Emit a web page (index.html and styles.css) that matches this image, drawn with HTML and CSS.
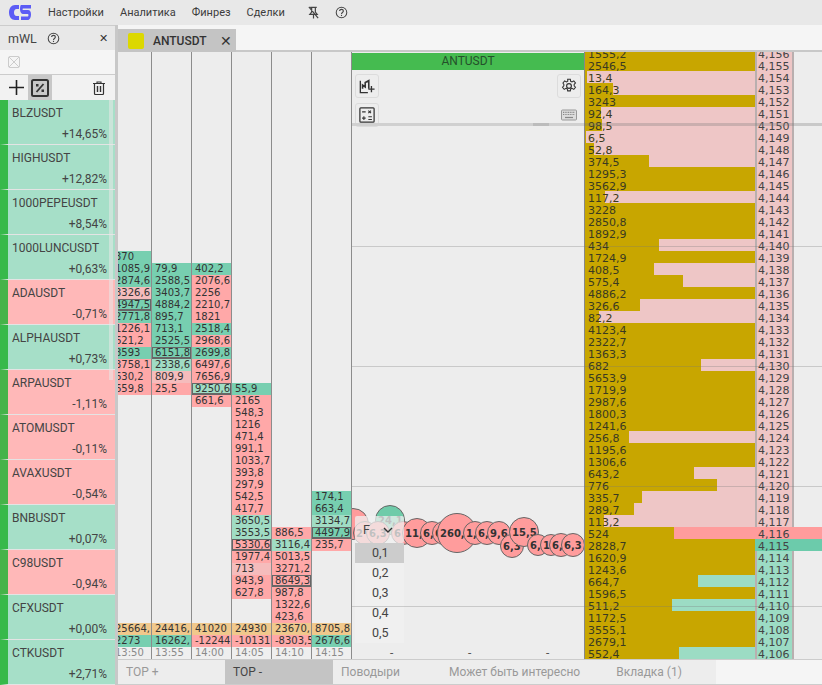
FILE: index.html
```html
<!DOCTYPE html>
<html lang="en">
<head>
  <meta charset="UTF-8">
  <title>ANTUSDT</title>
  <link rel="stylesheet" href="styles.css">
</head>
<body>
  <header class="topbar">
    <svg class="logo" viewBox="0 0 22 15">
      <path d="M10 0H6C2.500 0 0 3 0 7.500S2.500 15 6 15h4v-4H7.500C6 11 5 9.500 5 7.500S6 4 7.500 4H10z" fill="#5c5cf5"/>
      <path d="M12 0h10v3.500H14c-.6 0-.6 1.500 0 1.500h5c2 0 3 1.500 3 4.500S20.500 15 19 15h-7v-3.500h7c.6 0 .6-2.500 0-2.500h-5C12.500 9 11 7 11 4.500S11.500 0 12 0z" fill="#5c5cf5"/>
    </svg>
    <nav class="menu">
      <a>Настройки</a>
      <a>Аналитика</a>
      <a>Финрез</a>
      <a>Сделки</a>
    </nav>
    <svg class="top-icon pin" viewBox="0 0 14 14">
      <path d="M3.500 1.500h7M5 1.500v5L3 9h8L9 6.500v-5M7 9v4.500M2 1l10 12" fill="none" stroke="#444" stroke-width="1.300"/>
    </svg>
    <svg class="top-icon help" viewBox="0 0 14 14">
      <circle cx="7" cy="7" r="5.700" fill="none" stroke="#444" stroke-width="1.100"/>
      <path d="M5 5.500C5 3 9 3 9 5.500 9 7 7 7 7 8.500" fill="none" stroke="#444" stroke-width="1.200"/>
      <rect x="6.400" y="9.500" width="1.200" height="1.300" fill="#444"/>
    </svg>
  </header>

  <div class="layout">
    <aside class="sidebar">
      <div class="side-head">
        <span class="side-title">mWL</span>
        <svg class="side-help" viewBox="0 0 14 14">
          <circle cx="7" cy="7" r="5.700" fill="none" stroke="#444" stroke-width="1.100"/>
          <path d="M5 5.500C5 3 9 3 9 5.500 9 7 7 7 7 8.500" fill="none" stroke="#444" stroke-width="1.200"/>
          <rect x="6.400" y="9.500" width="1.200" height="1.300" fill="#444"/>
        </svg>
        <span class="side-close">✕</span>
      </div>
      <div class="side-filter">
        <svg class="filter-box" viewBox="0 0 12 12">
          <rect x=".5" y=".5" width="11" height="11" rx="1.500" fill="none" stroke="#ccc"/>
          <path d="M1 1l10 10M11 1L1 11" stroke="#ccc"/>
        </svg>
      </div>
      <div class="side-tools">
        <svg class="tool-plus" viewBox="0 0 15 15"><path d="M7.500 0v15M0 7.500h15" stroke="#222" stroke-width="1.600"/></svg>
        <span class="tool-percent">
          <svg viewBox="0 0 18 18">
            <rect x="1" y="1" width="16" height="16" rx="1.500" fill="none" stroke="#333" stroke-width="2"/>
            <path d="M12.500 5L5.500 13" stroke="#333" stroke-width="1.800"/>
            <rect x="5" y="5" width="2.500" height="2.500" fill="#333"/>
            <rect x="10.500" y="10.500" width="2.500" height="2.500" fill="#333"/>
          </svg>
        </span>
        <svg class="tool-trash" viewBox="0 0 12 14">
          <path d="M0 2.500h12M4 2.500V1h4v1.500" fill="none" stroke="#333" stroke-width="1.100"/>
          <path d="M1.500 2.500v10c0 .6.400 1 1 1h7c.6 0 1-.4 1-1v-10" fill="none" stroke="#333" stroke-width="1.200"/>
          <path d="M4.500 5v6M7.500 5v6" stroke="#333" stroke-width="1.400"/>
        </svg>
      </div>
      <div class="watchlist" id="watchlist"></div>
      <div class="side-scroll"></div>
    </aside>

    <main class="workspace">
      <div class="tabstrip">
        <div class="doc-tab">
          <span class="doc-swatch"></span>
          <span class="doc-name">ANTUSDT</span>
          <span class="doc-close">✕</span>
        </div>
      </div>

      <div class="board">
        <section class="clusters" id="clusters"></section>

        <section class="chart">
          <div class="chart-title">ANTUSDT</div>
          <div class="chart-tools">
            <div class="tool-col">
              <span class="tool-btn">
                <svg viewBox="0 0 18 18">
                  <path d="M1.500 3v13.500H10" fill="none" stroke="#333" stroke-width="1.500"/>
                  <path d="M4 12V8l3 2V5l4-2v9" fill="none" stroke="#333" stroke-width="1.800"/>
                  <path d="M14 9v7M10.500 12.500h7" stroke="#333" stroke-width="1.500"/>
                </svg>
              </span>
              <span class="tool-btn">
                <svg viewBox="0 0 18 18">
                  <rect x="1" y="1" width="16" height="16" rx="1" fill="none" stroke="#333" stroke-width="1.400"/>
                  <path d="M3.500 5.500h4M10.500 4l3 3M13.500 4l-3 3M3.500 12.500h4M5.500 10.500v4M10.500 11h4M10.500 14h4" stroke="#333" stroke-width="1.200"/>
                </svg>
              </span>
            </div>
            <div class="tool-col tool-col-right">
              <span class="tool-btn">
                <svg viewBox="0 0 18 18">
                  <circle cx="9" cy="9" r="2.700" fill="none" stroke="#333" stroke-width="1.300"/>
                  <path d="M7.500 1.500h3l.4 2.200 1.500.7 2-1.200 1.900 2.400-1.500 1.600v1.600l1.500 1.600-1.900 2.400-2-1.200-1.500.7-.4 2.200h-3l-.4-2.200-1.500-.7-2 1.200-1.900-2.400 1.500-1.600V7.200L2.200 5.600l1.900-2.400 2 1.200 1.500-.7z" fill="none" stroke="#333" stroke-width="1.200"/>
                </svg>
              </span>
              <svg class="keyboard" viewBox="0 0 16 11">
                <rect x=".5" y=".5" width="15" height="10" rx="1" fill="#ddd" stroke="#999"/>
                <path d="M2 2.800h12M2 5h12" stroke="#888" stroke-width="1.200" stroke-dasharray="1 .7"/>
                <path d="M4 8h8" stroke="#888" stroke-width="1.200"/>
              </svg>
            </div>
          </div>
          <div class="splitter"><span class="splitter-grip"></span></div>
          <div class="bubbles" id="bubbles"></div>
          <div class="tick-row"><span>-</span><span>-</span><span>-</span></div>

          <div class="step-picker">
            <div class="step-head"><span>F</span>
              <svg viewBox="0 0 10 6"><path d="M1 1l4 4 4-4" fill="none" stroke="#333" stroke-width="1.400"/></svg>
            </div>
            <ul class="step-list">
              <li class="is-selected">0,1</li>
              <li>0,2</li>
              <li>0,3</li>
              <li>0,4</li>
              <li>0,5</li>
            </ul>
          </div>
        </section>

        <section class="ladder" id="ladder"></section>

        <div class="grid-line grid-top"></div>
        <div class="grid-line grid-a"></div>
        <div class="grid-line grid-b"></div>
        <div class="grid-line grid-c"></div>
        <div class="grid-line grid-d"></div>
      </div>

      <nav class="bottom-tabs">
        <a>TOP +</a>
        <a class="is-active">TOP -</a>
        <a>Поводыри</a>
        <a>Может быть интересно</a>
        <a>Вкладка (1)</a>
      </nav>
    </main>
  </div>

  <script src="script.js"></script>
</body>
</html>
```

FILE: styles.css
```css
* {
  box-sizing: border-box;
  margin: 0;
  padding: 0;
}

html, body {
  height: 100%;
  overflow: hidden;
}

body {
  font-family: Roboto, "Liberation Sans", sans-serif;
  font-size: 12px;
  color: #444;
  background-color: #ededed;
}

/* top bar */
.topbar {
  display: flex;
  align-items: center;
  height: 25px;
  background-color: #e8e8e8;
}

.logo {
  width: 22px;
  height: 15px;
  margin-left: 9px;
  margin-bottom: 1px;
}

.menu {
  display: flex;
  gap: 16px;
  margin-left: 17px;
  font-size: 11px;
  color: #3c3c3c;
}

.top-icon {
  width: 13px;
  height: 13px;
}

.pin {
  margin-left: 22px;
}

.help {
  margin-left: 15px;
}

.layout {
  display: flex;
  height: 660px;
}

/* left watchlist */
.sidebar {
  position: relative;
  display: flex;
  flex-direction: column;
  flex-shrink: 0;
  width: 118px;
  border-right: 3px solid #c8c8c8;
  background-color: #f5f5f5;
  overflow: hidden;
}

.side-head {
  display: flex;
  align-items: center;
  height: 26px;
  padding: 0 7px 0 8px;
  background-color: #e8e8e8;
  border-top: 1px solid #ccc;
  font-size: 12.500px;
}

.side-help {
  width: 13px;
  height: 13px;
  margin-left: 10px;
}

.side-close {
  margin-left: auto;
  font-size: 11px;
  color: #333;
}

.side-filter {
  display: flex;
  align-items: center;
  height: 25px;
  padding-left: 8px;
  border-bottom: 1px solid #ccc;
}

.filter-box {
  width: 12px;
  height: 12px;
}

.side-tools {
  display: flex;
  align-items: center;
  height: 25px;
  background-color: #f2f2f2;
}

.tool-plus {
  width: 15px;
  height: 15px;
  margin-left: 9px;
}

.tool-percent {
  display: flex;
  align-items: center;
  justify-content: center;
  width: 24px;
  height: 25px;
  margin-left: 4px;
  background-color: #c8c8c8;
}

.tool-percent svg {
  width: 18px;
  height: 18px;
}

.tool-trash {
  width: 12px;
  height: 14px;
  margin-left: 41px;
}

.watchlist {
  display: flex;
  flex-direction: column;
}

.watch-row {
  display: flex;
  flex-direction: column;
  justify-content: space-between;
  height: 45px;
  padding: 6px 8px 2px 12px;
  border-left: 8px solid #37b94a;
  border-bottom: 1px solid #e4e4e4;
  font-size: 12px;
  line-height: 15px;
}

.watch-row.up {
  background-color: #a6dfc8;
}

.watch-row.down {
  background-color: #ffb8b8;
  border-left-color: #45b34a;
}

.watch-name {
  margin-left: -8px;
}

.watch-change {
  text-align: right;
}

.side-scroll {
  position: absolute;
  left: 109px;
  top: 75px;
  width: 4px;
  height: 280px;
  background-color: rgba(232, 232, 232, 0.55);
}

/* right part */
.workspace {
  display: flex;
  flex-direction: column;
  flex-grow: 1;
  min-width: 0;
}

.tabstrip {
  height: 27px;
  padding-top: 4px;
  background-color: #f5f5f5;
  border-bottom: 2px solid #c8c8c8;
}

.doc-tab {
  display: flex;
  align-items: center;
  width: 118px;
  height: 23px;
  padding-left: 10px;
  background-color: #c4c4c4;
}

.doc-swatch {
  width: 16px;
  height: 16px;
  border-radius: 2px;
  background-color: #dcd800;
}

.doc-name {
  margin-left: 9px;
  font-weight: 500;
  font-size: 12px;
  color: #333;
}

.doc-close {
  margin-left: auto;
  margin-right: 4px;
  font-size: 14px;
  color: #333;
}

.board {
  position: relative;
  display: flex;
  height: 607px;
  background-color: #ededed;
  overflow: hidden;
}

/* cluster columns */
.clusters {
  display: flex;
  width: 240px;
  margin-left: -6px;
  flex-shrink: 0;
  font-family: "DejaVu Sans", sans-serif;
  font-size: 10px;
  line-height: 12px;
  color: #333;
}

.cluster-col {
  display: flex;
  flex-direction: column;
  width: 40px;
  flex-shrink: 0;
  border-right: 1px solid #8c8c8c;
}

.cell {
  flex-shrink: 0;
  height: 12px;
  padding-left: 3px;
  white-space: nowrap;
  overflow: hidden;
}

.cell.buy {
  background-color: #77cfb0;
}

.cell.sell {
  background-color: #ffa8a8;
}

.cell.buy-soft {
  background-color: #a0dcc4;
}

.cell.sell-soft {
  background-color: #f5bcbc;
}

.cell.boxed {
  box-shadow: inset 0 0 0 1px #666, inset 0 -2px 0 #666;
}

.cell.total {
  background-color: #f0c88c;
}

.cell.time {
  color: #8a8a8a;
  background-color: #efefef;
}

.col-foot {
  margin-top: auto;
}

/* chart in the middle */
.chart {
  position: relative;
  width: 232px;
  flex-shrink: 0;
}

.chart-title {
  height: 17px;
  margin-top: 1px;
  line-height: 17px;
  text-align: center;
  background-color: #45bb50;
  color: #24502a;
}

.chart-tools {
  display: flex;
  justify-content: space-between;
  padding: 4px 3px 0;
}

.tool-col {
  display: flex;
  flex-direction: column;
  gap: 5px;
}

.tool-col-right {
  align-items: center;
  gap: 11px;
}

.tool-btn {
  display: flex;
  align-items: center;
  justify-content: center;
  width: 24px;
  height: 24px;
  border: 1px solid #dcdcdc;
  border-radius: 3px;
}

.tool-btn svg {
  width: 16px;
  height: 16px;
}

.keyboard {
  width: 16px;
  height: 12px;
}

.splitter {
  position: absolute;
  left: 0;
  right: 0;
  top: 71px;
  height: 3px;
  background-color: #d0d0d0;
}

.splitter-grip {
  position: absolute;
  left: 181px;
  top: 0;
  width: 16px;
  height: 3px;
  background-color: #bcbcbc;
}

.bubbles {
  position: absolute;
  inset: 0;
  overflow: hidden;
}

.bubble {
  position: absolute;
  display: flex;
  align-items: center;
  padding-left: 2px;
  border: 1px solid #666;
  border-radius: 50%;
  background-color: #ff9c9c;
  font-family: "DejaVu Sans", sans-serif;
  font-size: 10px;
  font-weight: bold;
  color: #333;
  overflow: hidden;
  white-space: nowrap;
}

.bubble.buy {
  background-color: #6fcba9;
}

.tick-row span {
  position: absolute;
  top: 594px;
  font-size: 12px;
  color: #555;
}

.tick-row span:nth-child(1) { left: 38px; }
.tick-row span:nth-child(2) { left: 116px; }
.tick-row span:nth-child(3) { left: 194px; }

.step-picker {
  position: absolute;
  left: 3px;
  top: 464px;
  width: 49px;
  font-size: 12.500px;
  color: #444;
}

.step-head {
  display: flex;
  align-items: center;
  justify-content: space-between;
  height: 27px;
  padding: 0 11px 0 8px;
  border-radius: 2px;
  background-color: rgba(240, 240, 240, 0.75);
}

.step-head svg {
  width: 10px;
  height: 6px;
}

.step-list {
  list-style: none;
  background-color: rgba(240, 240, 240, 0.8);
}

.step-list li {
  height: 20px;
  line-height: 20px;
  padding-left: 17px;
}

.step-list li.is-selected {
  background-color: #ccc;
}

/* price ladder */
.ladder {
  display: flex;
  flex-direction: column;
  flex-grow: 1;
  padding-top: 7px;
  font-family: "DejaVu Sans", sans-serif;
  font-size: 11px;
  line-height: 16px;
  color: #3a3a20;
  border-left: 1px solid #888;
}

.ladder-row {
  display: flex;
  flex-shrink: 0;
  height: 12px;
}

.ladder-row:first-child {
  margin-top: -12px;
}

.ladder-vol {
  position: relative;
  width: 170px;
  flex-shrink: 0;
}

.ladder-bar {
  position: absolute;
  left: 0;
  top: 0;
  bottom: 0;
  background-color: #c8a600;
}

.ladder-num {
  position: relative;
  padding-left: 3px;
}

.ladder-price {
  position: relative;
  width: 39px;
  padding-left: 1px;
  flex-shrink: 0;
  border-left: 2px solid #b9afaf;
  border-right: 2px solid #b9afaf;
  color: #444;
}

.ladder-rest {
  flex-grow: 1;
}

.ladder-row.ask .ladder-vol,
.ladder-row.ask .ladder-price {
  background-color: #eec6c6;
}

.ladder-row.bid .ladder-vol,
.ladder-row.bid .ladder-price {
  background-color: #9cdcc4;
}

.ladder-row.best-ask .ladder-vol,
.ladder-row.best-ask .ladder-price,
.ladder-row.best-ask .ladder-rest {
  background-color: #ff9c9c;
  border-color: transparent;
}

.ladder-row.best-bid .ladder-vol,
.ladder-row.best-bid .ladder-price,
.ladder-row.best-bid .ladder-rest {
  background-color: #6ccbab;
  border-color: transparent;
}

.grid-line {
  position: absolute;
  left: 234px;
  right: 0;
  height: 1px;
  background-color: rgba(120, 120, 120, 0.3);
}

.grid-top { left: 466px; top: 71px; height: 3px; }
.grid-a { top: 194px; }
.grid-b { top: 314px; }
.grid-c { top: 434px; }
.grid-d { top: 554px; }

/* bottom tabs */
.bottom-tabs {
  display: flex;
  height: 26px;
  background-color: #f5f5f5;
  border-top: 1px solid #ccc;
  border-bottom: 1px solid #ccc;
}

.bottom-tabs a {
  min-width: 108px;
  padding: 0 28px 0 8px;
  line-height: 24px;
  font-size: 12px;
  color: #999;
  background-color: #ededed;
}

.bottom-tabs a:first-child {
  min-width: 107px;
}

.bottom-tabs a.is-active {
  background-color: #c4c4c4;
  color: #444;
}
```

FILE: script.js
```js
const watchlist = [
  ['BLZUSDT', '+14,65%'], ['HIGHUSDT', '+12,82%'], ['1000PEPEUSDT', '+8,54%'],
  ['1000LUNCUSDT', '+0,63%'], ['ADAUSDT', '-0,71%'], ['ALPHAUSDT', '+0,73%'],
  ['ARPAUSDT', '-1,11%'], ['ATOMUSDT', '-0,11%'], ['AVAXUSDT', '-0,54%'],
  ['BNBUSDT', '+0,07%'], ['C98USDT', '-0,94%'], ['CFXUSDT', '+0,00%'],
  ['CTKUSDT', '+2,71%']
];

// b = buy, s = sell, B/S = soft colour, x = boxed
const clusters = [
  { start: 199, time: '13:50', total: '25664,', delta: ['2273', 'b'], cells: [
    ['370', 'b'], ['1085,9', 'b'], ['2874,6', 'b'], ['3326,6', 'S'], ['4947,5', 'bx'], ['2771,8', 'b'],
    ['1226,1', 's'], ['621,2', 's'], ['8593', 'b'], ['3758,1', 's'], ['630,2', 's'], ['659,8', 's']] },
  { start: 211, time: '13:55', total: '24416,', delta: ['16262,', 'b'], cells: [
    ['79,9', 'b'], ['2588,5', 'b'], ['3403,7', 'b'], ['4884,2', 'b'], ['895,7', 'b'], ['713,1', 'b'],
    ['2525,5', 'b'], ['6151,8', 'bx'], ['2338,6', 'B'], ['809,9', 'S'], ['25,5', 's']] },
  { start: 211, time: '14:00', total: '41020', delta: ['-12244', 's'], cells: [
    ['402,2', 'b'], ['2076,6', 's'], ['2256', 's'], ['2210,7', 's'], ['1821', 's'], ['2518,4', 'b'],
    ['2968,6', 's'], ['2699,8', 'b'], ['6497,6', 's'], ['7656,9', 's'], ['9250,6', 'Bx'], ['661,6', 's']] },
  { start: 331, time: '14:05', total: '24930', delta: ['-10131', 's'], cells: [
    ['55,9', 'b'], ['2165', 's'], ['548,3', 's'], ['1216', 's'], ['471,4', 's'], ['991,1', 's'],
    ['1033,7', 's'], ['393,8', 's'], ['297,9', 's'], ['542,5', 's'], ['417,7', 's'], ['3650,5', 'B'],
    ['3553,5', 'B'], ['5330,6', 'sx'], ['1977,4', 's'], ['713', 'S'], ['943,9', 's'], ['627,8', 's']] },
  { start: 475, time: '14:10', total: '23670,', delta: ['-8303,5', 's'], cells: [
    ['886,5', 's'], ['3116,4', 'B'], ['5013,5', 's'], ['3271,2', 's'], ['8649,3', 'sx'], ['987,8', 's'],
    ['1322,6', 's'], ['423,6', 's']] },
  { start: 439, time: '14:15', total: '8705,8', delta: ['2676,6', 'b'], cells: [
    ['174,1', 'b'], ['663,4', 'b'], ['3134,7', 'B'], ['4497,9', 'bx'], ['235,7', 's']] }
];

const cellClass = { b: 'buy', s: 'sell', B: 'buy-soft', S: 'sell-soft' };

const bubbles = [
  [1, 472, 16, '', ''], [38, 468, 15, '24,1', 'buy'], [13, 481, 12, '2', ''], [26, 481, 12, '6,3', ''],
  [51, 481, 12, '6', ''], [65, 481, 15, '11,6', ''], [80, 481, 12, '6,', ''], [92, 481, 12, '6', ''],
  [105, 481, 20, '260,', ''], [123, 481, 12, '1,', ''], [135, 481, 12, '6,9', ''], [147, 481, 12, '9,6', ''],
  [160, 494, 12, '6,3', ''], [172, 480, 15, '15,5', ''],
  [186, 493, 11, '6,', ''], [199, 493, 11, '1', ''], [209, 493, 12, '6,', ''], [221, 493, 12, '6,3', '']
];

const ladder = [
  '1555,2', '2546,5', '13,4', '164,3', '3243', '92,4', '98,5', '6,5', '52,8', '374,5',
  '1295,3', '3562,9', '117,2', '3228', '2850,8', '1892,9', '434', '1724,9', '408,5', '575,4',
  '4886,2', '326,6', '82,2', '4123,4', '2322,7', '1363,3', '682', '5653,9', '1719,9', '2987,6',
  '1800,3', '1241,6', '256,8', '1195,6', '1306,6', '643,2', '776', '335,7', '289,7', '113,2',
  '524', '2828,7', '1620,9', '1243,6', '664,7', '1596,5', '511,2', '1172,5', '3555,1', '2679,1', '552,4'
];

document.getElementById('watchlist').innerHTML = watchlist.map(([name, change]) => `
  <div class="watch-row ${change[0] === '-' ? 'down' : 'up'}">
    <span class="watch-name">${name}</span>
    <span class="watch-change">${change}</span>
  </div>`).join('');

function cell(text, flags, extra = '') {
  const classes = ['cell', cellClass[flags[0]], flags.includes('x') ? 'boxed' : '', extra];
  return `<div class="${classes.join(' ')}">${text}</div>`;
}

document.getElementById('clusters').innerHTML = clusters.map(col => `
  <div class="cluster-col" style="padding-top: ${col.start}px">
    ${col.cells.map(([text, flags]) => cell(text, flags)).join('')}
    <div class="cell total col-foot">${col.total}</div>
    ${cell(col.delta[0], col.delta[1])}
    <div class="cell time">${col.time}</div>
  </div>`).join('');

document.getElementById('bubbles').innerHTML = bubbles.map(([cx, cy, r, text, kind]) => `
  <span class="bubble ${kind}" style="left: ${cx - r}px; top: ${cy - r}px; width: ${r * 2}px; height: ${r * 2}px">${text}</span>`).join('');

document.getElementById('ladder').innerHTML = ladder.map((vol, i) => {
  const price = 4156 - i;
  const value = parseFloat(vol.replace(',', '.'));
  const width = Math.min(value / 5.9, 170);
  let side = price > 4115 ? 'ask' : 'bid';
  if (price === 4116) side = 'best-ask';
  if (price === 4115) side = 'best-bid';
  const label = '4,' + String(price).slice(1);
  return `<div class="ladder-row ${side}">
    <div class="ladder-vol"><div class="ladder-bar" style="width: ${width.toFixed(1)}px"></div><span class="ladder-num">${vol}</span></div>
    <div class="ladder-price">${label}</div>
    <div class="ladder-rest"></div>
  </div>`;
}).join('');
```
